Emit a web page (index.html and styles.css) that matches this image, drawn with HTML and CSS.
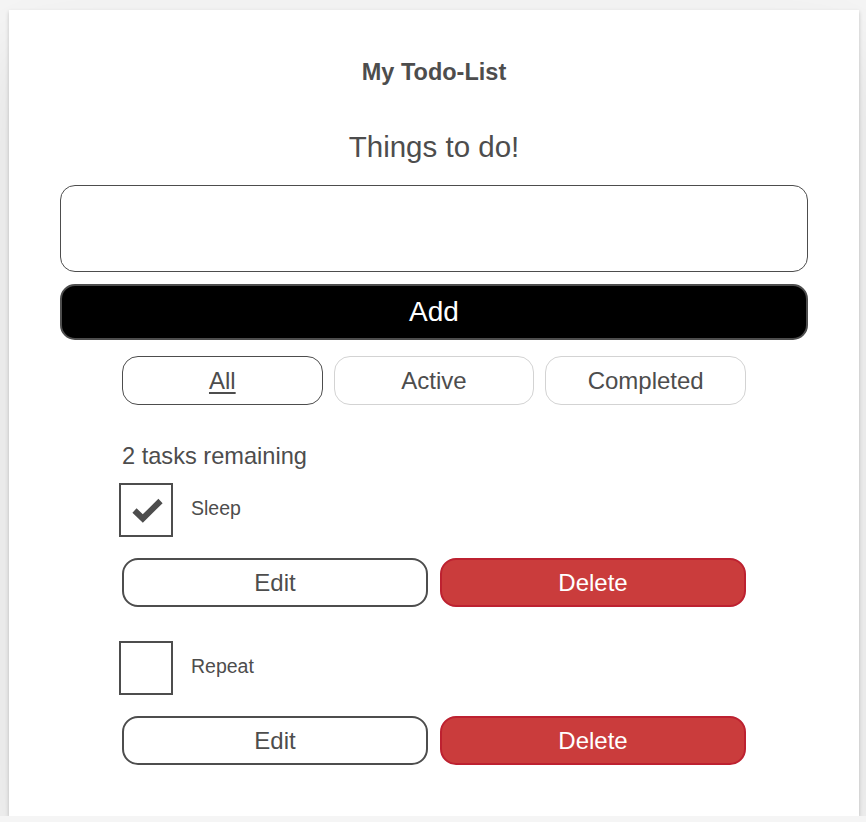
FILE: index.html
```html
<!DOCTYPE html>
<html lang="en">
<head>
<meta charset="utf-8">
<title>My Todo-List</title>
<link rel="stylesheet" href="styles.css">
</head>
<body>
<main class="todoapp">
  <h1 class="title">My Todo-List</h1>
  <form class="new-todo">
    <h2 class="label-lg">Things to do!</h2>
    <input class="todo-input" type="text" aria-label="New task">
    <button type="button" class="btn btn-add">Add</button>
  </form>
  <div class="filters">
    <button type="button" class="filter filter--on">All</button>
    <button type="button" class="filter">Active</button>
    <button type="button" class="filter">Completed</button>
  </div>
  <section class="list">
    <h2 class="count">2 tasks remaining</h2>
    <ul class="todos">
      <li class="todo">
        <div class="todo-row">
          <span class="checkbox">
            <svg class="check" width="54" height="54" viewBox="0 0 54 54"><polyline points="15.5,27.5 23.8,35.5 41.5,18" fill="none" stroke="#4d4d4d" stroke-width="6"/></svg>
          </span>
          <span class="todo-label">Sleep</span>
        </div>
        <div class="todo-actions">
          <button type="button" class="btn btn-edit">Edit</button>
          <button type="button" class="btn btn-delete">Delete</button>
        </div>
      </li>
      <li class="todo">
        <div class="todo-row">
          <span class="checkbox"></span>
          <span class="todo-label">Repeat</span>
        </div>
        <div class="todo-actions">
          <button type="button" class="btn btn-edit">Edit</button>
          <button type="button" class="btn btn-delete">Delete</button>
        </div>
      </li>
    </ul>
  </section>
</main>
</body>
</html>
```
FILE: styles.css
```css
* { box-sizing: border-box; }

body {
  margin: 0;
  background: #f5f5f5;
  font-family: "Liberation Sans", Arial, sans-serif;
  color: #4d4d4d;
}

.todoapp {
  width: 850px;
  margin: 10px 0 0 9px;
  padding: 48px 51px 51px;
  background: #fff;
  box-shadow: 0 2px 4px 0 rgba(0, 0, 0, 0.2), 0 40px 80px 0 rgba(0, 0, 0, 0.1);
}

.title {
  margin: 0;
  font-size: 23.5px;
  line-height: 28px;
  font-weight: bold;
  text-align: center;
}

.new-todo {
  margin: 44px 0 0;
  display: flex;
  flex-direction: column;
}

.label-lg {
  margin: 0;
  font-size: 29.5px;
  line-height: 34px;
  font-weight: normal;
  text-align: center;
}

.todo-input {
  margin-top: 21px;
  width: 100%;
  height: 87px;
  border: 1px solid #4d4d4d;
  border-radius: 15px;
  background: #fff;
  font: inherit;
}

.btn {
  font-family: "Liberation Sans", Arial, sans-serif;
  cursor: pointer;
}

.btn-add {
  margin-top: 12px;
  width: 100%;
  height: 56px;
  background: #000;
  color: #fff;
  border: 2px solid #4d4d4d;
  border-radius: 15px;
  font-size: 28px;
  padding: 0;
}

.filters {
  width: 624px;
  margin: 16px auto 0;
  display: grid;
  grid-template-columns: repeat(3, 1fr);
  gap: 11px;
}

.filter {
  height: 49px;
  padding: 0;
  background: #fff;
  color: #4d4d4d;
  border: 1px solid #d3d3d3;
  border-radius: 16px;
  font-family: "Liberation Sans", Arial, sans-serif;
  font-size: 24px;
}

.filter--on {
  border-color: #4d4d4d;
  text-decoration: underline;
  text-underline-offset: 3px;
}

.list {
  width: 624px;
  margin: 37px auto 0;
}

.count {
  margin: 0;
  font-size: 23.6px;
  line-height: 28px;
  font-weight: normal;
}

.todos {
  list-style: none;
  margin: 13px 0 0;
  padding: 0;
  display: flex;
  flex-direction: column;
  gap: 34px;
}

.todo {
  display: flex;
  flex-direction: column;
  gap: 21px;
}

.todo-row {
  display: flex;
  align-items: flex-start;
}

.checkbox {
  width: 54px;
  height: 54px;
  margin-left: -3px;
  border: 2px solid #4d4d4d;
  position: relative;
  flex: none;
}

.check {
  position: absolute;
  left: -2px;
  top: -2px;
}

.todo-label {
  margin-left: 18px;
  padding-top: 14px;
  font-size: 19.5px;
  line-height: 22px;
}

.todo-actions {
  display: grid;
  grid-template-columns: 1fr 1fr;
  gap: 12px;
}

.btn-edit,
.btn-delete {
  height: 49px;
  padding: 0;
  border-radius: 16px;
  font-size: 24px;
}

.btn-edit {
  background: #fff;
  color: #4d4d4d;
  border: 2px solid #4d4d4d;
}

.btn-delete {
  background: #ca3c3c;
  color: #fff;
  border: 2px solid #bd2130;
}
```
